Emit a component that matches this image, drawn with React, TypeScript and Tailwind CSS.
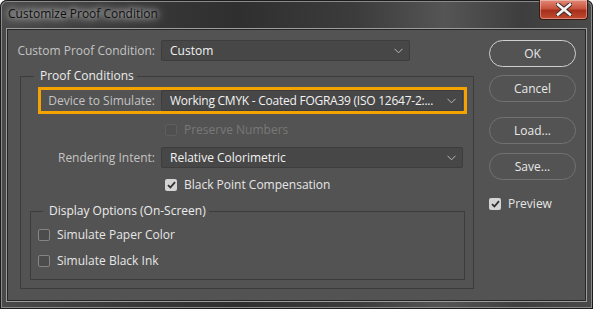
import type { ReactNode } from 'react'

const font = "font-['Open_Sans','Noto_Sans',sans-serif]"

function Chevron() {
  return (
    <svg width="9" height="6" viewBox="0 0 9 6" className="shrink-0">
      <path d="M0.5 0.8 L4.5 4.8 L8.5 0.8" fill="none" stroke="#b8b8b8" strokeWidth="1" />
    </svg>
  )
}

function Dropdown({ value, className = '', textClass = '' }: { value: string; className?: string; textClass?: string }) {
  return (
    <div
      className={`flex items-center gap-[4px] rounded-[2px] border border-[#3d3d3d] bg-[#474747] pl-[8px] pr-[6px] text-[12px] text-[#f2f2f2] ${className}`}
    >
      <span className={`min-w-0 flex-1 whitespace-nowrap leading-none ${textClass}`}>{value}</span>
      <Chevron />
    </div>
  )
}

function Checkbox({ checked = false, disabled = false }: { checked?: boolean; disabled?: boolean }) {
  if (checked) {
    return (
      <span className="flex h-[12px] w-[12px] shrink-0 items-center justify-center rounded-[2px] bg-[#d4d4d4]">
        <svg width="9" height="8" viewBox="0 0 9 8">
          <path d="M1 4.2 L3.4 6.5 L8 1.2" fill="none" stroke="#303030" strokeWidth="1.8" />
        </svg>
      </span>
    )
  }
  return (
    <span
      className={`h-[12px] w-[12px] shrink-0 rounded-[2px] border ${
        disabled ? 'border-[#5e5e5e] bg-[#505050]' : 'border-[#858585] bg-[#4c4c4c]'
      }`}
    />
  )
}

function CheckRow({
  label,
  checked,
  disabled,
  className = '',
}: {
  label: string
  checked?: boolean
  disabled?: boolean
  className?: string
}) {
  return (
    <div className={`flex h-[16px] items-center gap-[7px] text-[12px] ${className}`}>
      <Checkbox checked={checked} disabled={disabled} />
      <span className={disabled ? 'text-[#787878]' : 'text-[#e6e6e6]'}>{label}</span>
    </div>
  )
}

function Pill({ children, primary = false, className = '' }: { children: ReactNode; primary?: boolean; className?: string }) {
  return (
    <button
      type="button"
      className={`flex h-[27px] w-[87px] items-center justify-center rounded-full text-[12px] text-[#e8e8e8] ${
        primary ? 'border-[1.5px] border-[#d0d0d0]' : 'border border-[#727272]'
      } ${className}`}
    >
      {children}
    </button>
  )
}

function LabelRow({ label, width, children, className = '' }: { label: string; width: string; children: ReactNode; className?: string }) {
  return (
    <div className={`flex items-center ${className}`}>
      <span className={`shrink-0 pr-[6px] text-right text-[12px] text-[#c4c4c4] ${width}`}>{label}</span>
      {children}
    </div>
  )
}

export default function App() {
  return (
    <div
      className={`relative h-[309px] w-[593px] overflow-hidden rounded-t-[7px] bg-[linear-gradient(90deg,#4a4a4a_0%,#3a3a3a_20%,#2f2f2f_40%,#3c3c3c_60%,#555_75%,#3e3e3e_88%,#4a4a4a_100%)] shadow-[inset_0_0_0_1px_#1c1c1c,inset_0_0_0_2px_#8a8a8a] ${font}`}
    >
      {/* title bar */}
      <div className="flex h-[28px] items-center pl-[8px] pb-[1px] text-[12px] text-[#111] [text-shadow:0_0_6px_#fff,0_0_12px_#ddd]">
        Customize Proof Condition
      </div>
      <div className="absolute right-[5px] top-0 flex h-[20px] w-[49px] items-center justify-center rounded-b-[4px] border border-t-0 border-[#3a1a14] bg-[linear-gradient(180deg,#e08a78_0%,#c9523c_45%,#a5301c_55%,#c44a30_100%)] shadow-[inset_0_0_0_1px_rgba(255,255,255,0.35)]">
        <svg width="16" height="13" viewBox="0 0 16 13">
          <path d="M2 1.5 L14 11.5 M14 1.5 L2 11.5" stroke="#3a2a28" strokeWidth="4.6" strokeLinecap="square" />
          <path d="M2 1.5 L14 11.5 M14 1.5 L2 11.5" stroke="#f4f4f4" strokeWidth="2.6" strokeLinecap="square" />
        </svg>
      </div>

      {/* client area */}
      <div className="mx-[6px] h-[274px] border border-[#9c9c9c]">
        <div className="flex h-full border border-[#262626] bg-[#535353] pl-[12px]">
          <div className="flex w-[454px] flex-col">
            <LabelRow label="Custom Proof Condition:" width="w-[153px]" className="mt-[10px] -ml-[12px]">
              <Dropdown value="Custom" className="h-[21px] w-[249px]" />
            </LabelRow>

            <fieldset className="mt-[6px] h-[222px] border border-[#3c3c3c] pl-[17px] pr-[6px]">
              <legend className="-ml-[4px] pl-[6px] pr-[3px] text-[12px] leading-[18px] text-[#ececec]">Proof Conditions</legend>

              <div className="mt-[2px] flex h-[27px] items-center border-[3px] border-[#f5a300]">
                <span className="w-[120px] shrink-0 pr-[6px] text-right text-[12px] text-[#c4c4c4]">Device to Simulate:</span>
                <Dropdown
                  value="Working CMYK - Coated FOGRA39 (ISO 12647-2:..."
                  textClass="tracking-[-0.25px]"
                  className="h-[21px] w-[302px]"
                />
              </div>

              <CheckRow label="Preserve Numbers" disabled className="mt-[8px] ml-[127px]" />

              <LabelRow label="Rendering Intent:" width="w-[123px]" className="mt-[9px]">
                <Dropdown value="Relative Colorimetric" className="h-[21px] w-[302px]" />
              </LabelRow>

              <CheckRow label="Black Point Compensation" checked className="mt-[9px] ml-[127px]" />

              <fieldset className="mt-[9px] -ml-[8px] mr-[2px] h-[78px] border border-[#3c3c3c] pl-[7px]">
                <legend className="ml-[5px] pl-[6px] pr-[3px] text-[12px] leading-[18px] text-[#ececec]">Display Options (On-Screen)</legend>
                <CheckRow label="Simulate Paper Color" className="mt-[7px]" />
                <CheckRow label="Simulate Black Ink" className="mt-[10px]" />
              </fieldset>
            </fieldset>
          </div>

          <div className="ml-[15px] flex flex-col pt-[10px]">
            <Pill primary>OK</Pill>
            <Pill className="mt-[8px]">Cancel</Pill>
            <Pill className="mt-[15px]">Load...</Pill>
            <Pill className="mt-[9px]">Save...</Pill>
            <CheckRow label="Preview" checked className="mt-[16px]" />
          </div>
        </div>
      </div>
    </div>
  )
}
